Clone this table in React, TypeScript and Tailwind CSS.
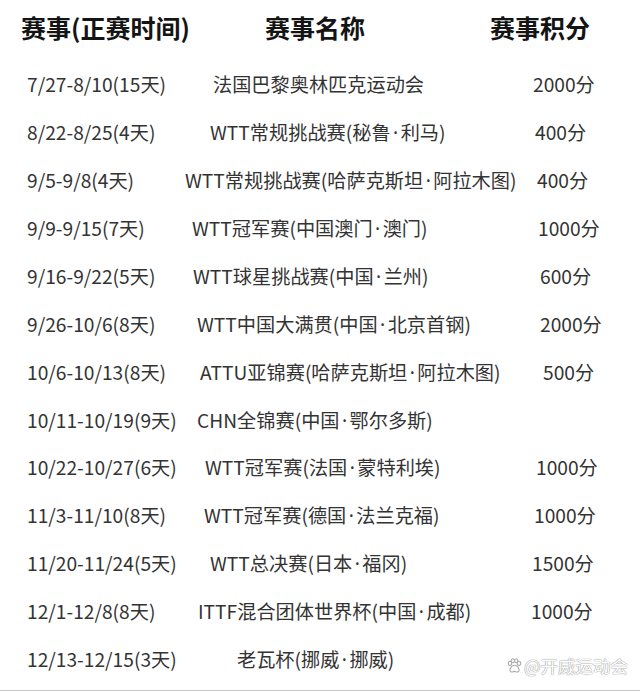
import React from "react";

type Row = {
  date: string;
  name: string;
  pts: string;
  nameCls: string;
  ptsCls: string;
};

const rows: Row[] = [
  { date: "7/27-8/10(15天)", name: "法国巴黎奥林匹克运动会", pts: "2000分", nameCls: "pl-[28px]", ptsCls: "pl-[3px]" },
  { date: "8/22-8/25(4天)", name: "WTT常规挑战赛(秘鲁·利马)", pts: "400分", nameCls: "pl-[25px]", ptsCls: "pl-[5px]" },
  { date: "9/5-9/8(4天)", name: "WTT常规挑战赛(哈萨克斯坦·阿拉木图)", pts: "400分", nameCls: "pl-[0px]", ptsCls: "pl-[7px]" },
  { date: "9/9-9/15(7天)", name: "WTT冠军赛(中国澳门·澳门)", pts: "1000分", nameCls: "pl-[7px]", ptsCls: "pl-[8px]" },
  { date: "9/16-9/22(5天)", name: "WTT球星挑战赛(中国·兰州)", pts: "600分", nameCls: "pl-[8px]", ptsCls: "pl-[10px]" },
  { date: "9/26-10/6(8天)", name: "WTT中国大满贯(中国·北京首钢)", pts: "2000分", nameCls: "pl-[12px]", ptsCls: "pl-[10px]" },
  { date: "10/6-10/13(8天)", name: "ATTU亚锦赛(哈萨克斯坦·阿拉木图)", pts: "500分", nameCls: "pl-[15px]", ptsCls: "pl-[13px]" },
  { date: "10/11-10/19(9天)", name: "CHN全锦赛(中国·鄂尔多斯)", pts: "", nameCls: "pl-[12px]", ptsCls: "pl-[0px]" },
  { date: "10/22-10/27(6天)", name: "WTT冠军赛(法国·蒙特利埃)", pts: "1000分", nameCls: "pl-[20px]", ptsCls: "pl-[6px]" },
  { date: "11/3-11/10(8天)", name: "WTT冠军赛(德国·法兰克福)", pts: "1000分", nameCls: "pl-[19px]", ptsCls: "pl-[4px]" },
  { date: "11/20-11/24(5天)", name: "WTT总决赛(日本·福冈)", pts: "1500分", nameCls: "pl-[25px]", ptsCls: "pl-[2px]" },
  { date: "12/1-12/8(8天)", name: "ITTF混合团体世界杯(中国·成都)", pts: "1000分", nameCls: "pl-[13px]", ptsCls: "pl-[1px]" },
  { date: "12/13-12/15(3天)", name: "老瓦杯(挪威·挪威)", pts: "", nameCls: "pl-[52px]", ptsCls: "pl-[0px]" },
];

function Name({ text }: { text: string }) {
  const parts = text.split("·");
  return (
    <>
      {parts.map((p, i) => (
        <React.Fragment key={i}>
          {i > 0 && (
            <span className="inline-block w-[10px] text-center [font-family:'Noto_Sans',sans-serif]">·</span>
          )}
          {p}
        </React.Fragment>
      ))}
    </>
  );
}

function Paw() {
  return (
    <svg width="15" height="15" viewBox="0 0 14 14" fill="#fff" stroke="#aaaaaa" strokeWidth="1">
      <ellipse cx="2.8" cy="5" rx="1.6" ry="2" />
      <ellipse cx="11.2" cy="5" rx="1.6" ry="2" />
      <ellipse cx="5.4" cy="2.6" rx="1.5" ry="1.9" />
      <ellipse cx="8.6" cy="2.6" rx="1.5" ry="1.9" />
      <path d="M7 6.8c-2.2 0-4.3 2.5-4.3 4.4 0 1.6 1.4 2.2 2.4 1.8.8-.3 1.3-.5 1.9-.5s1.1.2 1.9.5c1 .4 2.4-.2 2.4-1.8 0-1.9-2.1-4.4-4.3-4.4z" />
    </svg>
  );
}

export default function App() {
  return (
    <div
      className="relative w-[640px] h-[692px] bg-white overflow-hidden flex flex-col"
      style={{ fontFamily: '"Noto Sans CJK SC", "Noto Sans", sans-serif' }}
    >
      <div className="h-[54px] flex items-center text-[25px] font-bold text-[#141414] leading-none">
        <div className="w-[265px] pl-[21px]">赛事(正赛时间)</div>
        <div className="w-[225px]">赛事名称</div>
        <div>赛事积分</div>
      </div>
      <div className="mt-[7px] flex flex-col text-[19.2px] text-[#333333] leading-none">
        {rows.map((r, i) => (
          <div key={i} className="h-[47.9px] grid grid-cols-[185px_345px_110px] items-center">
            <div className="pl-[27px] whitespace-nowrap">{r.date}</div>
            <div className={`${r.nameCls} whitespace-nowrap`}>
              <Name text={r.name} />
            </div>
            <div className={`${r.ptsCls} whitespace-nowrap`}>{r.pts}</div>
          </div>
        ))}
      </div>
      <div className="mt-auto mb-[1px] h-[1px] bg-[#c8c8c8]" />
      <div className="absolute left-[507px] top-[657px] flex items-center gap-[2px] text-[17.5px] leading-none text-white [text-shadow:0_0_1px_#8f8f8f,0_0_1px_#8f8f8f]">
        <Paw />
        <span>@开威运动会</span>
      </div>
    </div>
  );
}
